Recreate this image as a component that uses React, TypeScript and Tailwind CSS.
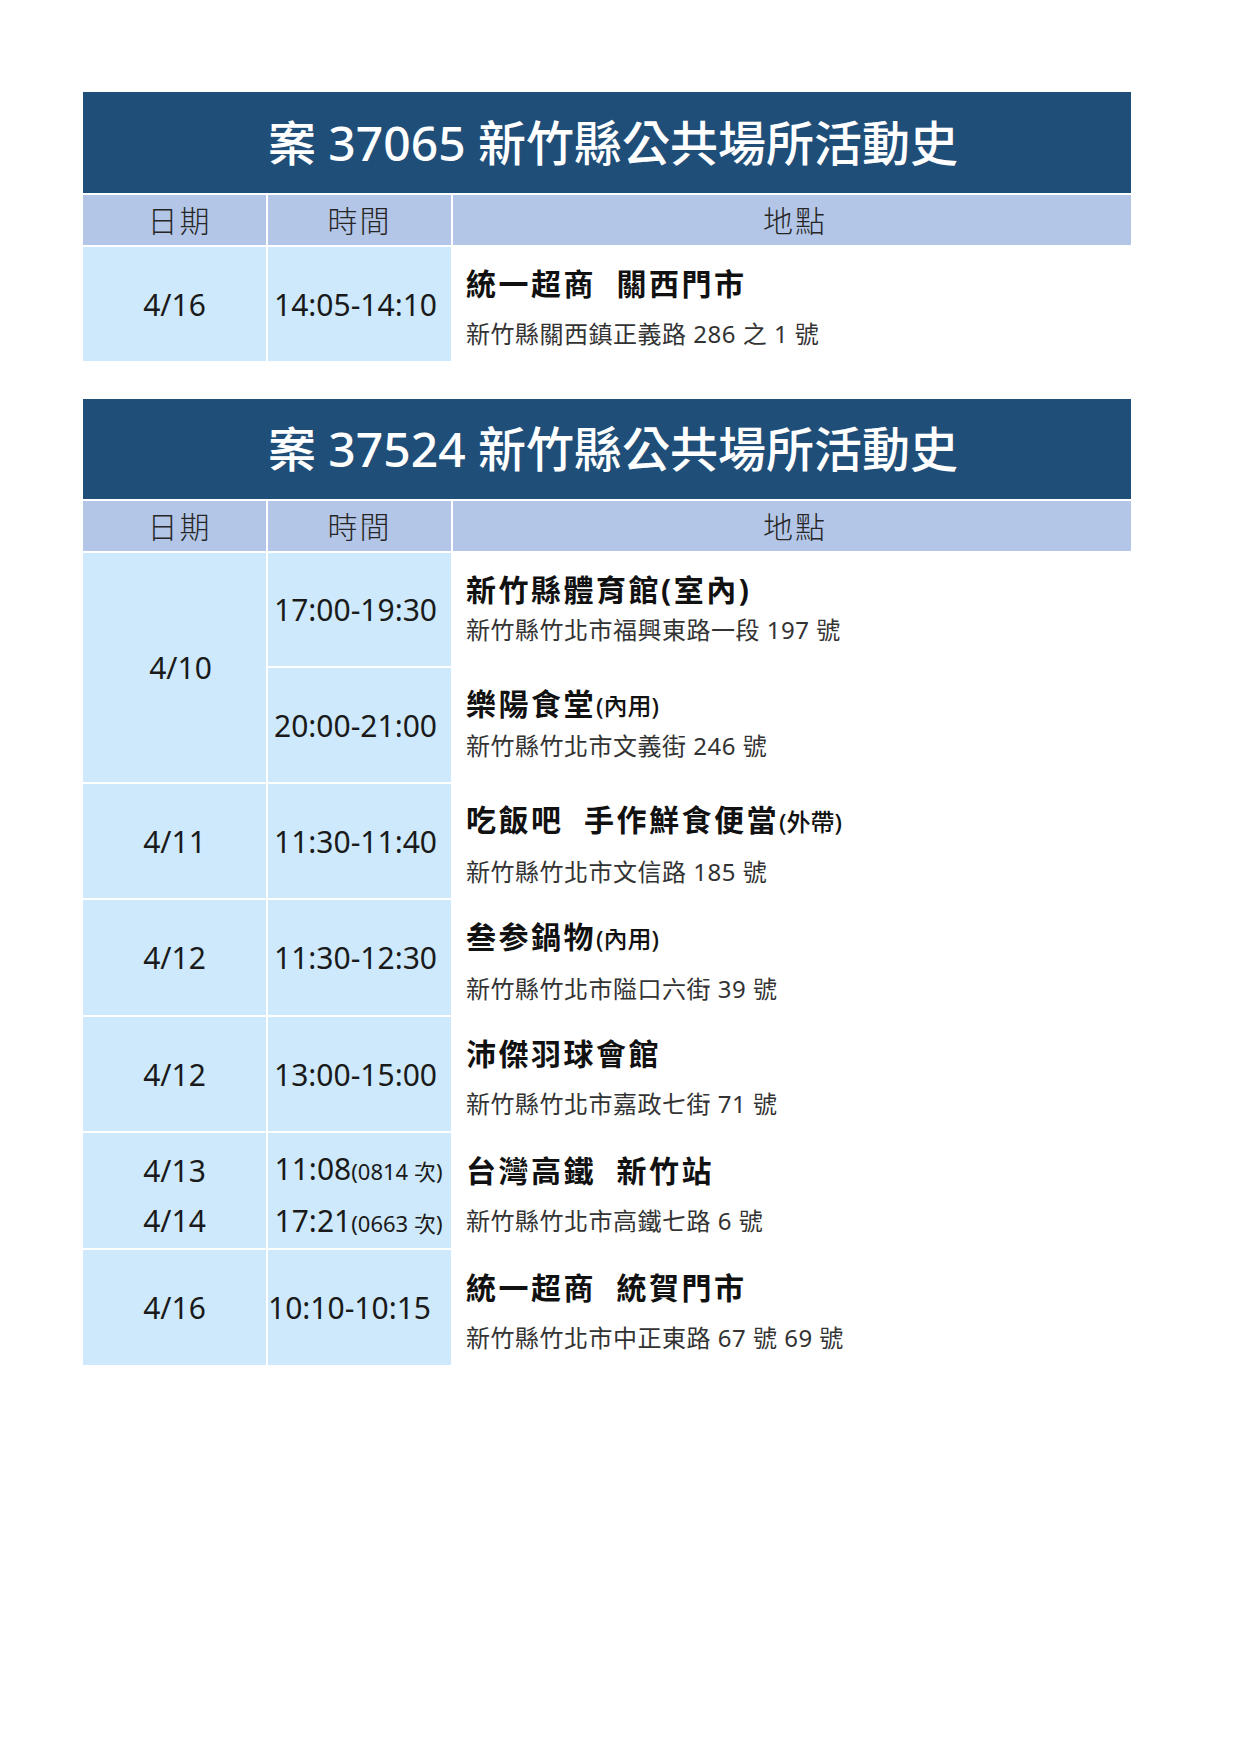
import React from 'react';

type Place = {
  name: string;
  note?: string;
  addr: string;
};

type Row = {
  date: React.ReactNode;
  time: React.ReactNode;
  place: Place;
  h: string;
  timeLeft?: boolean;
};

const FONT = "font-['Noto_Sans','Noto_Sans_CJK_TC',sans-serif]";

const Title = ({ text }: { text: string }) => (
  <div className="col-span-3 flex items-center justify-center bg-[#1f4e79] pl-[12px] text-[48px] font-medium text-white">
    {text}
  </div>
);

const Header = () => (
  <>
    <div className="flex items-center justify-center bg-[#b4c6e7] pl-[10px] text-[30px] font-light tracking-[2px] text-[#262626]">日期</div>
    <div className="flex items-center justify-center bg-[#b4c6e7] text-[30px] font-light tracking-[2px] text-[#262626]">時間</div>
    <div className="flex items-center justify-center bg-[#b4c6e7] pl-[6px] text-[30px] font-light tracking-[2px] text-[#262626]">地點</div>
  </>
);

const PlaceCell = ({ place, tight }: { place: Place; tight?: boolean }) => (
  <div className={tight ? 'flex flex-col justify-center pl-[13px]' : 'flex flex-col justify-center gap-[10px] pl-[13px] pt-[10px]'}>
    <div className="whitespace-pre text-[30px] font-bold leading-[40px] tracking-[2.5px] text-[#111]">
      {place.name}
      {place.note && <span className="text-[24px] font-medium tracking-normal">{place.note}</span>}
    </div>
    <div className="text-[24px] leading-[40px] tracking-[0.5px] text-[#333]">{place.addr}</div>
  </div>
);

const Train = ({ t, no }: { t: string; no: string }) => (
  <div className="leading-[50px]">
    {t}
    <span className="text-[22px]">({no} 次)</span>
  </div>
);

const rows: Row[] = [
  {
    date: '4/11',
    time: '11:30-11:40',
    place: { name: '吃飯吧  手作鮮食便當', note: '(外帶)', addr: '新竹縣竹北市文信路 185 號' },
    h: 'h-[114px]',
  },
  {
    date: '4/12',
    time: '11:30-12:30',
    place: { name: '叁参鍋物', note: '(內用)', addr: '新竹縣竹北市隘口六街 39 號' },
    h: 'h-[115px]',
  },
  {
    date: '4/12',
    time: '13:00-15:00',
    place: { name: '沛傑羽球會館', addr: '新竹縣竹北市嘉政七街 71 號' },
    h: 'h-[114px]',
  },
  {
    date: (
      <div className="flex flex-col items-center pt-[10px] leading-[50px]">
        <div>4/13</div>
        <div>4/14</div>
      </div>
    ),
    time: (
      <div className="flex flex-col pt-[10px] pl-[6px]">
        <Train t="11:08" no="0814" />
        <Train t="17:21" no="0663" />
      </div>
    ),
    place: { name: '台灣高鐵  新竹站', addr: '新竹縣竹北市高鐵七路 6 號' },
    h: 'h-[115px]',
  },
  {
    date: '4/16',
    time: '10:10-10:15',
    place: { name: '統一超商  統賀門市', addr: '新竹縣竹北市中正東路 67 號 69 號' },
    h: 'h-[115px]',
    timeLeft: true,
  },
];

const cellBlue = 'flex items-center bg-[#cde9fb] text-[30px] text-[#1a1a1a]';

export default function App() {
  return (
    <div className={`min-h-[1755px] w-[1241px] bg-white pl-[83px] pt-[92px] ${FONT}`}>
      {/* 案 37065 */}
      <div className="grid w-[1048px] grid-cols-[183px_183px_678px] grid-rows-[101px_50px_114px] gap-[2px]">
        <Title text="案 37065 新竹縣公共場所活動史" />
        <Header />
        <div className={`${cellBlue} justify-center`}>4/16</div>
        <div className={`${cellBlue} justify-center pr-[8px]`}>14:05-14:10</div>
        <PlaceCell place={{ name: '統一超商  關西門市', addr: '新竹縣關西鎮正義路 286 之 1 號' }} />
      </div>

      {/* 案 37524 */}
      <div className="mt-[38px] grid w-[1048px] grid-cols-[183px_183px_678px] gap-[2px]">
        <div className="col-span-3 grid h-[100px]">
          <Title text="案 37524 新竹縣公共場所活動史" />
        </div>
        <div className="col-span-3 grid h-[50px] grid-cols-[183px_183px_678px] gap-[2px]">
          <Header />
        </div>

        <div className={`${cellBlue} row-span-2 justify-center pl-[12px]`}>4/10</div>
        <div className={`${cellBlue} h-[113px] justify-center pr-[8px]`}>17:00-19:30</div>
        <PlaceCell tight place={{ name: '新竹縣體育館(室內)', addr: '新竹縣竹北市福興東路一段 197 號' }} />
        <div className={`${cellBlue} h-[114px] justify-center pr-[8px]`}>20:00-21:00</div>
        <PlaceCell tight place={{ name: '樂陽食堂', note: '(內用)', addr: '新竹縣竹北市文義街 246 號' }} />

        {rows.map((r, i) => (
          <React.Fragment key={i}>
            <div className={`${cellBlue} ${r.h} justify-center`}>{r.date}</div>
            <div className={`${cellBlue} ${r.h} ${r.timeLeft ? 'justify-start' : 'justify-center pr-[8px]'}`}>{r.time}</div>
            <PlaceCell place={r.place} />
          </React.Fragment>
        ))}
      </div>
    </div>
  );
}
